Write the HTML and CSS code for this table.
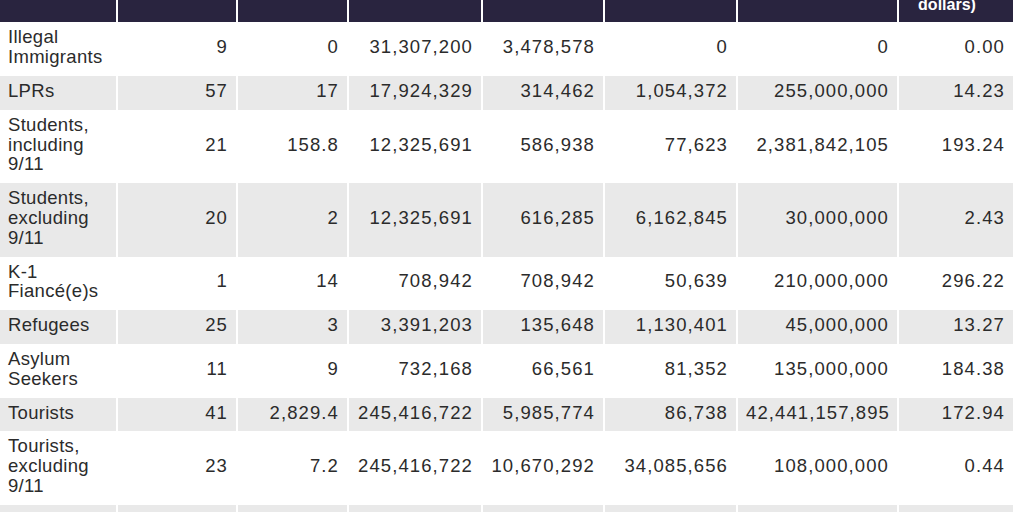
FILE: index.html
```html
<!DOCTYPE html>
<html lang="en">
<head>
<meta charset="utf-8">
<title>Cost of terrorism by visa category</title>
<link rel="stylesheet" href="styles.css">
</head>
<body>
<table class="data">
  <colgroup>
    <col class="c1"><col class="c2"><col class="c3"><col class="c4"><col class="c5"><col class="c6"><col class="c7"><col class="c8">
  </colgroup>
  <thead>
    <tr>
      <th></th><th></th><th></th><th></th><th></th><th></th><th></th><th class="last">dollars)</th>
    </tr>
  </thead>
  <tbody>
    <tr><td class="label">Illegal<br>Immigrants</td><td>9</td><td>0</td><td>31,307,200</td><td>3,478,578</td><td>0</td><td>0</td><td>0.00</td></tr>
    <tr><td class="label">LPRs</td><td>57</td><td>17</td><td>17,924,329</td><td>314,462</td><td>1,054,372</td><td>255,000,000</td><td>14.23</td></tr>
    <tr><td class="label">Students,<br>including<br>9/11</td><td>21</td><td>158.8</td><td>12,325,691</td><td>586,938</td><td>77,623</td><td>2,381,842,105</td><td>193.24</td></tr>
    <tr><td class="label">Students,<br>excluding<br>9/11</td><td>20</td><td>2</td><td>12,325,691</td><td>616,285</td><td>6,162,845</td><td>30,000,000</td><td>2.43</td></tr>
    <tr><td class="label">K-1<br>Fiancé(e)s</td><td>1</td><td>14</td><td>708,942</td><td>708,942</td><td>50,639</td><td>210,000,000</td><td>296.22</td></tr>
    <tr><td class="label">Refugees</td><td>25</td><td>3</td><td>3,391,203</td><td>135,648</td><td>1,130,401</td><td>45,000,000</td><td>13.27</td></tr>
    <tr><td class="label">Asylum<br>Seekers</td><td>11</td><td>9</td><td>732,168</td><td>66,561</td><td>81,352</td><td>135,000,000</td><td>184.38</td></tr>
    <tr><td class="label">Tourists</td><td>41</td><td>2,829.4</td><td>245,416,722</td><td>5,985,774</td><td>86,738</td><td>42,441,157,895</td><td>172.94</td></tr>
    <tr><td class="label">Tourists,<br>excluding<br>9/11</td><td>23</td><td>7.2</td><td>245,416,722</td><td>10,670,292</td><td>34,085,656</td><td>108,000,000</td><td>0.44</td></tr>
    <tr><td class="label">&nbsp;</td><td></td><td></td><td></td><td></td><td></td><td></td><td></td></tr>
  </tbody>
</table>
</body>
</html>
```

FILE: styles.css
```css
html, body {
  margin: 0;
  padding: 0;
  background: #ffffff;
}

body {
  font-family: "Liberation Sans", Arial, sans-serif;
  color: #2b2b2b;
  overflow: hidden;
}

.data {
  width: 1013px;
  table-layout: fixed;
  border-collapse: separate;
  border-spacing: 0;
  margin-top: -8px;
}

.c1 { width: 118px; }
.c2 { width: 120px; }
.c3 { width: 111px; }
.c4 { width: 134px; }
.c5 { width: 122px; }
.c6 { width: 133px; }
.c7 { width: 161px; }
.c8 { width: 114px; }

.data th {
  background: #29243f;
  color: #ffffff;
  font-weight: bold;
  font-size: 16px;
  line-height: 18px;
  padding: 4px 8px 8.4px;
  text-align: center;
  vertical-align: bottom;
  border-right: 2px solid #ffffff;
}

.data th.last {
  border-right: 0;
  padding-right: 26px;
}

.data td {
  font-size: 18.5px;
  line-height: 19.8px;
  padding: 5px 8px 9px;
  text-align: right;
  vertical-align: middle;
  white-space: nowrap;
  letter-spacing: 1.1px;
  border-right: 2px solid #ffffff;
}

.data td:last-child {
  border-right: 0;
}

.data td.label {
  text-align: left;
  letter-spacing: 0.3px;
  padding-right: 4px;
}

.data tbody tr:nth-child(even) td {
  background: #e9e9e9;
}
```
